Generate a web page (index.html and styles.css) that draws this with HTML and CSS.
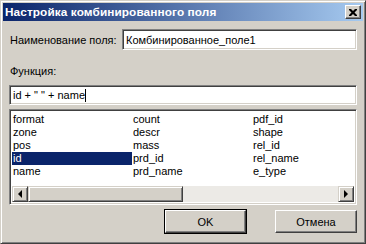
FILE: index.html
```html
<!DOCTYPE html>
<html>
<head>
	<title>Настройка комбинированного поля</title>
	<link rel="stylesheet" href="styles.css">
</head>
<body>
	<div class="window">
		<div class="titlebar">
			<span class="title">Настройка комбинированного поля</span>
			<div class="close-btn">
				<svg width="8" height="7" viewBox="0 0 8 7"><path d="M0 0h2l2 2 2-2h2v1l-2.5 2.5L8 6v1H6L4 5 2 7H0V6l2.5-2.5L0 1z" fill="#000"/></svg>
			</div>
		</div>
		<div class="content">
			<div class="name-row">
				<span class="label">Наименование поля:</span>
				<div class="field name-field">Комбинированное_поле1</div>
			</div>
			<div class="func-label">Функция:</div>
			<div class="field func-field">id + " " + name<span class="caret"></span></div>
			<div class="listbox">
				<div class="list-items">
					<div>format</div>
					<div>zone</div>
					<div>pos</div>
					<div class="selected">id</div>
					<div>name</div>
					<div>count</div>
					<div>descr</div>
					<div>mass</div>
					<div>prd_id</div>
					<div>prd_name</div>
					<div>pdf_id</div>
					<div>shape</div>
					<div>rel_id</div>
					<div>rel_name</div>
					<div>e_type</div>
				</div>
				<div class="hscroll">
					<div class="arrow-btn"><span class="arrow-left"></span></div>
					<div class="thumb"></div>
					<div class="track"></div>
					<div class="arrow-btn"><span class="arrow-right"></span></div>
				</div>
			</div>
			<div class="buttons">
				<div class="btn default"><span>OK</span></div>
				<div class="btn">Отмена</div>
			</div>
		</div>
	</div>
</body>
</html>
```
FILE: styles.css
```css
body{
	margin: 0;
	font-family: "Liberation Sans", Arial, sans-serif;
	font-size: 11px;
	color: #000;
}
.window{
	width: 366px;
	height: 244px;
	box-sizing: border-box;
	background: #d4d0c8;
	border: 1px solid;
	border-color: #d4d0c8 #404040 #404040 #d4d0c8;
	box-shadow: inset 1px 1px #fff, inset -1px -1px #808080;
	padding: 2px;
}
.titlebar{
	height: 18px;
	display: flex;
	align-items: center;
	justify-content: space-between;
	background: linear-gradient(to right, #0a246a, #a6caf0);
	padding: 0 2px 0 2px;
}
.title{
	color: #fff;
	font-weight: bold;
	font-size: 11.8px;
	letter-spacing: 0.1px;
}
.close-btn{
	width: 16px;
	height: 14px;
	box-sizing: border-box;
	background: #d4d0c8;
	border: 1px solid;
	border-color: #fff #404040 #404040 #fff;
	box-shadow: inset -1px -1px #808080;
	display: flex;
	align-items: center;
	justify-content: center;
}
.content{
	padding: 0 6px;
}
.field{
	background: #fff;
	box-sizing: border-box;
	border: 1px solid;
	border-color: #808080 #fff #fff #808080;
	box-shadow: inset 1px 1px #404040, inset -1px -1px #d4d0c8;
	display: flex;
	align-items: center;
	padding-left: 3px;
	white-space: pre;
}
.name-row{
	display: flex;
	align-items: center;
	justify-content: space-between;
	margin-top: 8px;
	padding-left: 1px;
}
.name-field{
	width: 235px;
	height: 21px;
}
.func-label{
	margin-top: 14px;
	height: 14px;
	line-height: 14px;
	padding-left: 1px;
}
.func-field{
	margin-top: 7px;
	height: 20px;
}
.caret{
	display: inline-block;
	width: 1px;
	height: 13px;
	background: #000;
}
.listbox{
	margin-top: 4px;
	height: 96px;
	box-sizing: border-box;
	background: #fff;
	border: 1px solid;
	border-color: #808080 #fff #fff #808080;
	box-shadow: inset 1px 1px #404040, inset -1px -1px #d4d0c8;
	padding: 2px 2px 2px 2px;
	display: flex;
	flex-direction: column;
	justify-content: space-between;
}
.list-items{
	display: grid;
	grid-auto-flow: column;
	grid-template-rows: repeat(5, 13px);
	grid-template-columns: repeat(3, 120px);
	margin-top: 1px;
}
.list-items div{
	line-height: 13px;
	padding-left: 1px;
}
.list-items .selected{
	background: #0a246a;
	color: #fff;
}
.hscroll{
	height: 16px;
	display: flex;
}
.arrow-btn{
	width: 16px;
	box-sizing: border-box;
	background: #d4d0c8;
	border: 1px solid;
	border-color: #d4d0c8 #404040 #404040 #d4d0c8;
	box-shadow: inset 1px 1px #fff, inset -1px -1px #808080;
	display: flex;
	align-items: center;
	justify-content: center;
}
.arrow-left{
	border-top: 4px solid transparent;
	border-bottom: 4px solid transparent;
	border-right: 4px solid #000;
}
.arrow-right{
	border-top: 4px solid transparent;
	border-bottom: 4px solid transparent;
	border-left: 4px solid #000;
}
.thumb{
	width: 155px;
	box-sizing: border-box;
	background: #d4d0c8;
	border: 1px solid;
	border-color: #d4d0c8 #404040 #404040 #d4d0c8;
	box-shadow: inset 1px 1px #fff, inset -1px -1px #808080;
}
.track{
	flex: 1;
	background: #eceae6;
}
.buttons{
	display: flex;
	justify-content: flex-end;
	gap: 28px;
	margin-top: 4px;
}
.btn{
	width: 82px;
	height: 23px;
	box-sizing: border-box;
	border: 1px solid;
	border-color: #fff #404040 #404040 #fff;
	box-shadow: inset -1px -1px #808080;
	display: flex;
	align-items: center;
	justify-content: center;
	margin-top: 1px;
}
.btn.default{
	width: 83px;
	height: 25px;
	margin-top: 0;
	border: 1px solid #000;
	box-shadow: none;
	padding: 0;
}
.btn.default span{
	flex: 1;
	align-self: stretch;
	display: flex;
	align-items: center;
	justify-content: center;
	border: 1px solid;
	border-color: #fff #404040 #404040 #fff;
	box-shadow: inset -1px -1px #808080;
}
```
